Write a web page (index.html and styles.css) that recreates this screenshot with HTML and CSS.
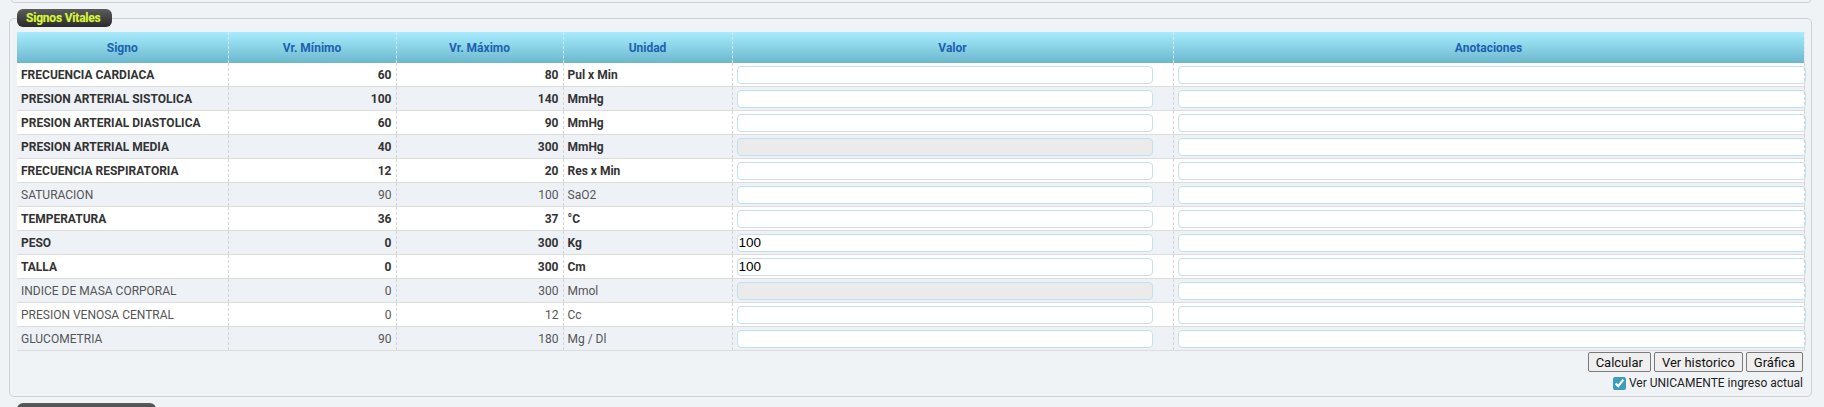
FILE: index.html
```html
<!DOCTYPE html>
<html lang="es">
<head>
<meta charset="utf-8">
<title>Signos Vitales</title>
<link rel="stylesheet" href="styles.css">
</head>
<body>
<div class="prev-panel"></div>
<fieldset class="panel">
  <legend class="badge">Signos Vitales</legend>
  <table class="vitals">
    <colgroup>
      <col class="c-signo"><col class="c-min"><col class="c-max"><col class="c-unit"><col class="c-val"><col class="c-notes">
    </colgroup>
    <thead>
      <tr><th>Signo</th><th>Vr. Mínimo</th><th>Vr. Máximo</th><th>Unidad</th><th>Valor</th><th>Anotaciones</th></tr>
    </thead>
    <tbody>
      <tr class="strong"><td>FRECUENCIA CARDIACA</td><td class="num">60</td><td class="num">80</td><td>Pul x Min</td><td><input class="in-val" type="text"></td><td><input class="in-notes" type="text"></td></tr>
      <tr class="strong"><td>PRESION ARTERIAL SISTOLICA</td><td class="num">100</td><td class="num">140</td><td>MmHg</td><td><input class="in-val" type="text"></td><td><input class="in-notes" type="text"></td></tr>
      <tr class="strong"><td>PRESION ARTERIAL DIASTOLICA</td><td class="num">60</td><td class="num">90</td><td>MmHg</td><td><input class="in-val" type="text"></td><td><input class="in-notes" type="text"></td></tr>
      <tr class="strong"><td>PRESION ARTERIAL MEDIA</td><td class="num">40</td><td class="num">300</td><td>MmHg</td><td><input class="in-val" type="text" disabled></td><td><input class="in-notes" type="text"></td></tr>
      <tr class="strong"><td>FRECUENCIA RESPIRATORIA</td><td class="num">12</td><td class="num">20</td><td>Res x Min</td><td><input class="in-val" type="text"></td><td><input class="in-notes" type="text"></td></tr>
      <tr><td>SATURACION</td><td class="num">90</td><td class="num">100</td><td>SaO2</td><td><input class="in-val" type="text"></td><td><input class="in-notes" type="text"></td></tr>
      <tr class="strong"><td>TEMPERATURA</td><td class="num">36</td><td class="num">37</td><td>°C</td><td><input class="in-val" type="text"></td><td><input class="in-notes" type="text"></td></tr>
      <tr class="strong"><td>PESO</td><td class="num">0</td><td class="num">300</td><td>Kg</td><td><input class="in-val" type="text" value="100"></td><td><input class="in-notes" type="text"></td></tr>
      <tr class="strong"><td>TALLA</td><td class="num">0</td><td class="num">300</td><td>Cm</td><td><input class="in-val" type="text" value="100"></td><td><input class="in-notes" type="text"></td></tr>
      <tr><td>INDICE DE MASA CORPORAL</td><td class="num">0</td><td class="num">300</td><td>Mmol</td><td><input class="in-val" type="text" disabled></td><td><input class="in-notes" type="text"></td></tr>
      <tr><td>PRESION VENOSA CENTRAL</td><td class="num">0</td><td class="num">12</td><td>Cc</td><td><input class="in-val" type="text"></td><td><input class="in-notes" type="text"></td></tr>
      <tr><td>GLUCOMETRIA</td><td class="num">90</td><td class="num">180</td><td>Mg / Dl</td><td><input class="in-val" type="text"></td><td><input class="in-notes" type="text"></td></tr>
    </tbody>
  </table>
  <div class="actions">
    <button type="button">Calcular</button>
    <button type="button">Ver historico</button>
    <button type="button">Gráfica</button>
  </div>
  <label class="only-current"><input type="checkbox" checked> Ver UNICAMENTE ingreso actual</label>
</fieldset>
<fieldset class="panel next">
  <legend class="badge badge-next">&nbsp;</legend>
</fieldset>
</body>
</html>
```

FILE: styles.css
```css
html, body {
  margin: 0;
  padding: 0;
  background: #f0f3f6;
  font-family: Roboto, "Liberation Sans", Arial, sans-serif;
  overflow: hidden;
}

.prev-panel {
  margin: -13px 12px 0 10px;
  height: 14px;
  border: 1px solid #d0d0d0;
  border-radius: 0 0 5px 5px;
}

.panel {
  margin: 6px 12px 0 9px;
  padding: 0 7px 6px 7px;
  border: 1px solid #d0d0d0;
  border-radius: 5px;
  min-width: 0;
}

.badge {
  padding: 0 11px 0 9px;
  margin: 0;
  height: 18px;
  line-height: 18px;
  box-sizing: border-box;
  background: linear-gradient(#5c5c5c, #2a2a2a);
  border-radius: 6px;
  color: #d4f53a;
  font-weight: bold;
  font-size: 12px;
  letter-spacing: -0.2px;
  text-shadow: 0 0 1px rgba(212, 245, 58, 0.4);
}

.badge-next {
  width: 139px;
}

.vitals {
  margin-top: 5px;
  border-collapse: collapse;
  table-layout: fixed;
  width: 1787px;
  font-size: 12px;
  color: #555;
}

.c-signo { width: 211px; }
.c-min { width: 168px; }
.c-max { width: 167px; }
.c-unit { width: 169px; }
.c-val { width: 441px; }
.c-notes { width: 631px; }

.vitals th {
  height: 31px;
  padding: 0;
  box-sizing: border-box;
  background: linear-gradient(#a7ecfd, #6cb7cd);
  color: #1c62b0;
  font-weight: bold;
  font-size: 12px;
  text-align: center;
  border-left: 1px dashed #dce8ec;
}

.vitals th:first-child {
  border-left: none;
}

.vitals th:last-child {
  border-right: 1px dashed #dce8ec;
}

.vitals td {
  height: 22px;
  padding: 1px 4px 0 4px;
  border-bottom: 1px solid #dcdcdc;
  border-left: 1px dashed #d4d4d4;
  white-space: nowrap;
  overflow: visible;
}

.vitals td:first-child {
  border-left: none;
}

.vitals td:last-child {
  border-right: 1px dashed #d4d4d4;
}

.vitals tbody tr {
  background: #ffffff;
}

.vitals tbody tr:nth-child(even) {
  background: #eef2f7;
}

.vitals tr.strong td {
  font-weight: bold;
  color: #333;
}

.vitals td.num {
  text-align: right;
}

.vitals input {
  display: block;
  box-sizing: border-box;
  height: 18px;
  margin: -1px 0 0 0;
  padding: 0 1px;
  border: 1px solid #c4dfee;
  border-radius: 4px;
  background: #fff;
  font-family: "Liberation Sans", Arial, sans-serif;
  font-size: 13.5px;
  font-weight: normal;
  color: #000;
  outline: none;
}

.vitals input:disabled {
  background: #ebebeb;
}

.vitals .in-val {
  width: 416px;
}

.vitals .in-notes {
  width: 628px;
}

.actions {
  display: flex;
  justify-content: flex-end;
  gap: 3px;
  margin: 1px 1px 0 0;
}

.actions button {
  height: 20px;
  padding: 0 7px;
  margin: 0;
  font-family: Roboto, "Liberation Sans", Arial, sans-serif;
  font-size: 13px;
  color: #111;
  background: #efefef;
  border: 1px solid #7a7a7a;
  border-radius: 2px;
}

.only-current {
  display: flex;
  justify-content: flex-end;
  align-items: center;
  gap: 3px;
  margin: 4px 1px 0 0;
  font-size: 12px;
  line-height: 14px;
  color: #222;
}

.only-current input {
  margin: 0;
  width: 13px;
  height: 13px;
  accent-color: #3d9dbd;
}

.next {
  margin-top: 6px;
  padding-bottom: 20px;
}
```
